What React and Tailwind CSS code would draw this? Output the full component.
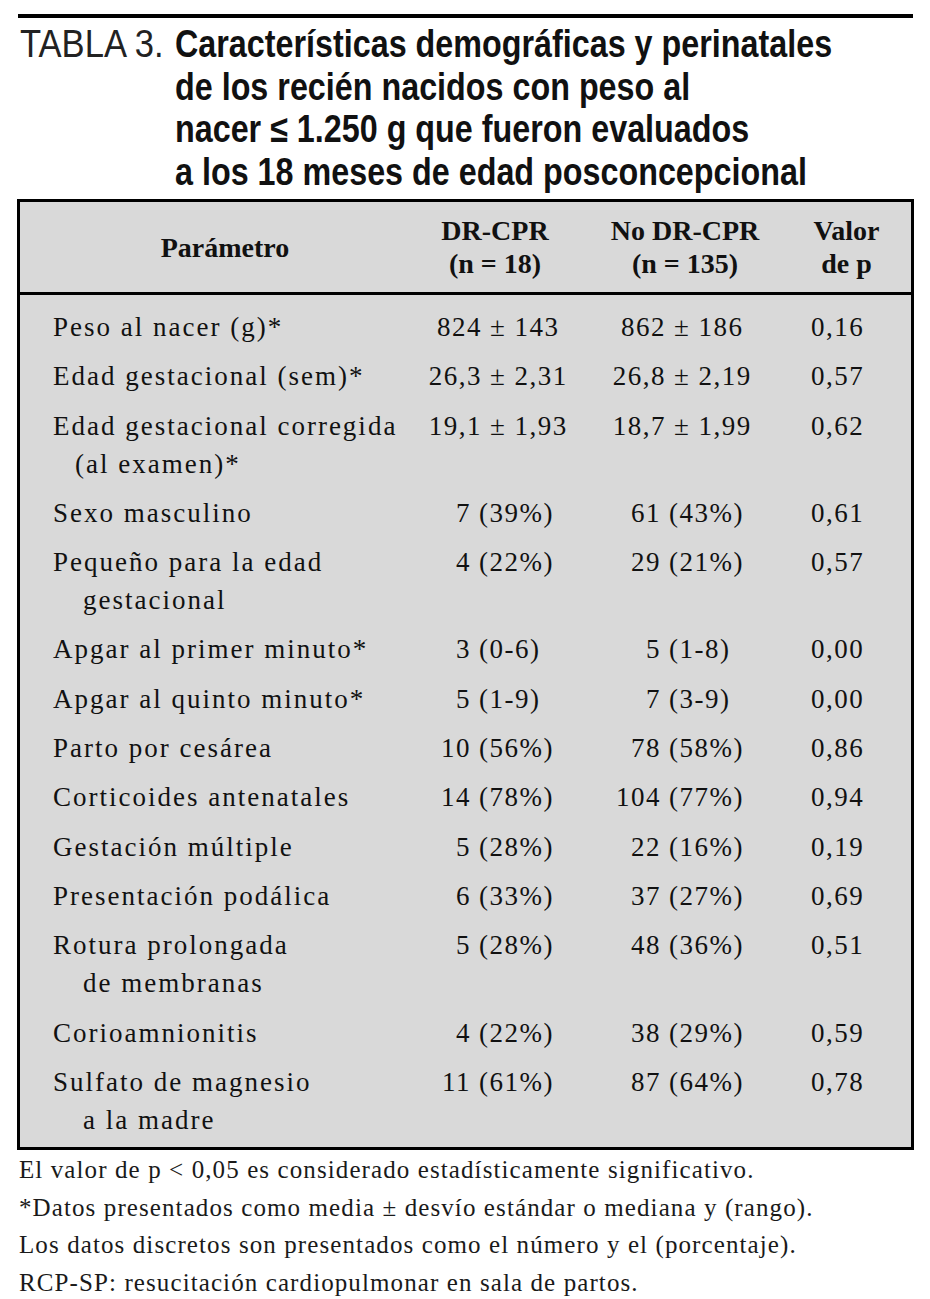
import React from "react";

const rows = [
  { p: ["Peso al nacer (g)*"], a: ["824", "± 143"], b: ["862", "± 186"], v: "0,16", pm: true },
  { p: ["Edad gestacional (sem)*"], a: ["26,3", "± 2,31"], b: ["26,8", "± 2,19"], v: "0,57", pm: true },
  { p: ["Edad gestacional corregida", "(al examen)*"], a: ["19,1", "± 1,93"], b: ["18,7", "± 1,99"], v: "0,62", pm: true, ind: "pl-[22px]" },
  { p: ["Sexo masculino"], a: ["7", "(39%)"], b: ["61", "(43%)"], v: "0,61" },
  { p: ["Pequeño para la edad", "gestacional"], a: ["4", "(22%)"], b: ["29", "(21%)"], v: "0,57" },
  { p: ["Apgar al primer minuto*"], a: ["3", "(0-6)"], b: ["5", "(1-8)"], v: "0,00" },
  { p: ["Apgar al quinto minuto*"], a: ["5", "(1-9)"], b: ["7", "(3-9)"], v: "0,00" },
  { p: ["Parto por cesárea"], a: ["10", "(56%)"], b: ["78", "(58%)"], v: "0,86" },
  { p: ["Corticoides antenatales"], a: ["14", "(78%)"], b: ["104", "(77%)"], v: "0,94" },
  { p: ["Gestación múltiple"], a: ["5", "(28%)"], b: ["22", "(16%)"], v: "0,19" },
  { p: ["Presentación podálica"], a: ["6", "(33%)"], b: ["37", "(27%)"], v: "0,69" },
  { p: ["Rotura prolongada", "de membranas"], a: ["5", "(28%)"], b: ["48", "(36%)"], v: "0,51" },
  { p: ["Corioamnionitis"], a: ["4", "(22%)"], b: ["38", "(29%)"], v: "0,59" },
  { p: ["Sulfato de magnesio", "a la madre"], a: ["11", "(61%)"], b: ["87", "(64%)"], v: "0,78" },
];

function Num({ parts, w }) {
  return (
    <div className="flex whitespace-nowrap tracking-[1.5px]">
      <span className={`${w} text-right`}>{parts[0]}</span>
      <span className="pl-[8px]">{parts[1]}</span>
    </div>
  );
}

const titleLines = [
  "Características demográficas y perinatales",
  "de los recién nacidos con peso al",
  "nacer ≤ 1.250 g que fueron evaluados",
  "a los 18 meses de edad posconcepcional",
];

export default function App() {
  const serif = { fontFamily: '"Liberation Serif", "Times New Roman", serif' };
  const sans = { fontFamily: '"Liberation Sans", Arial, sans-serif' };
  return (
    <div className="w-[930px] h-[1299px] bg-white text-[#111] overflow-hidden">
      <div className="pt-[14px] pl-[18px] pr-[17px]">
        <div className="h-[4px] bg-black" />
        <div className="flex pt-[5px] text-[38px] leading-[42.5px]" style={sans}>
          <div className="w-[157px] pl-[2px] whitespace-nowrap">
            <span className="inline-block origin-left scale-x-[0.91] font-light text-[#222]">TABLA 3.</span>
          </div>
          <div className="font-bold whitespace-nowrap">
            {titleLines.map((t) => (
              <div key={t}>
                <span className="inline-block origin-left scale-x-[0.85]">{t}</span>
              </div>
            ))}
          </div>
        </div>
      </div>

      <div className="mt-[6px] ml-[17px] w-[897px] border-[3px] border-black bg-[#d9d9d9]" style={serif}>
        <div className="grid grid-cols-[380px_190px_190px_1fr] h-[93px] items-center border-b-[3px] border-black font-bold text-[28px] leading-[33px] text-center">
          <div className="pl-[30px]">Parámetro</div>
          <div>
            <div>DR-CPR</div>
            <div>(n = 18)</div>
          </div>
          <div>
            <div>No DR-CPR</div>
            <div>(n = 135)</div>
          </div>
          <div className="pl-[2px]">
            <div>Valor</div>
            <div>de p</div>
          </div>
        </div>

        <div className="flex flex-col gap-[11.3px] pt-[13px] pb-[8px] text-[27px] leading-[38px]">
          {rows.map((r, i) => (
            <div key={i} className="grid grid-cols-[380px_190px_190px_1fr]">
              <div className="pl-[33px] whitespace-nowrap tracking-[2px]">
                <div>{r.p[0]}</div>
                {r.p[1] && <div className={r.ind || "pl-[30px]"}>{r.p[1]}</div>}
              </div>
              <Num parts={r.a} w={r.pm ? "w-[82px]" : "w-[71px]"} />
              <Num parts={r.b} w={r.pm ? "w-[76px]" : "w-[71px]"} />
              <div className="pl-[31px] tracking-[1.5px]">{r.v}</div>
            </div>
          ))}
        </div>
      </div>

      <div className="pt-[1px] pl-[19px] text-[25px] leading-[37.7px] tracking-[1.1px] text-[#1a1a1a]" style={serif}>
        <div>El valor de p &lt; 0,05 es considerado estadísticamente significativo.</div>
        <div>*Datos presentados como media ± desvío estándar o mediana y (rango).</div>
        <div>Los datos discretos son presentados como el número y el (porcentaje).</div>
        <div>RCP-SP: resucitación cardiopulmonar en sala de partos.</div>
      </div>
    </div>
  );
}
